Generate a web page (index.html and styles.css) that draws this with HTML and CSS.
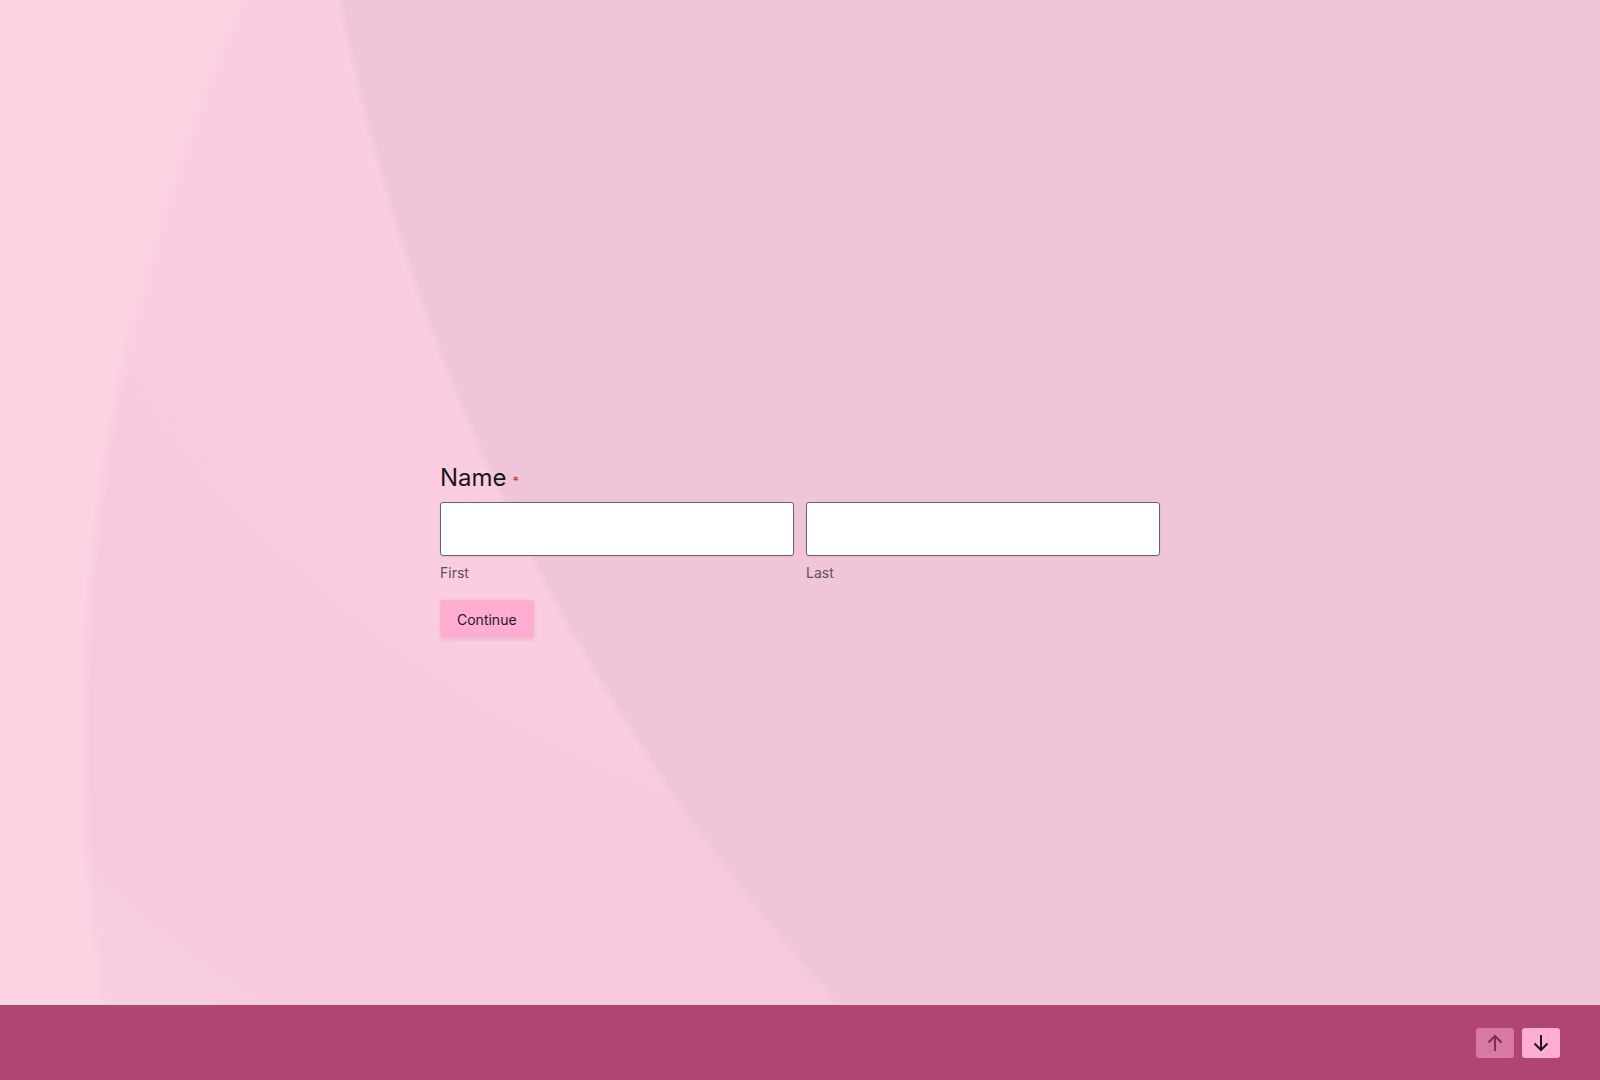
FILE: index.html
```html
<!DOCTYPE html>
<html lang="en">
<head>
<meta charset="utf-8">
<title>Name</title>
<link rel="stylesheet" href="styles.css">
</head>
<body>
<div class="page">
  <main class="stage">
    <form class="question">
      <div class="label"><span class="label-text">Name</span><span class="required">*</span></div>
      <div class="fields">
        <div class="field">
          <input class="input" type="text" aria-label="First">
          <div class="sublabel">First</div>
        </div>
        <div class="field">
          <input class="input" type="text" aria-label="Last">
          <div class="sublabel">Last</div>
        </div>
      </div>
      <button type="button" class="continue">Continue</button>
    </form>
  </main>
  <footer class="footer">
    <div class="nav">
      <button type="button" class="nav-btn nav-up" aria-label="Previous">
        <svg width="16" height="18" viewBox="0 0 16 18" fill="none" stroke="currentColor" stroke-width="2" stroke-linecap="butt" stroke-linejoin="miter"><path d="M8 17V2"/><path d="M1.5 8.5L8 2l6.5 6.5"/></svg>
      </button>
      <button type="button" class="nav-btn nav-down" aria-label="Next">
        <svg width="16" height="18" viewBox="0 0 16 18" fill="none" stroke="currentColor" stroke-width="2" stroke-linecap="butt" stroke-linejoin="miter"><path d="M8 1v15"/><path d="M1.5 9.5L8 16l6.5-6.5"/></svg>
      </button>
    </div>
  </footer>
</div>
</body>
</html>
```

FILE: styles.css
```css
html, body {
  margin: 0;
  padding: 0;
}

body {
  font-family: Inter, "Noto Sans", "Liberation Sans", sans-serif;
  color: #1c1a1b;
}

.page {
  width: 1600px;
  height: 1080px;
  display: flex;
  flex-direction: column;
  overflow: hidden;
}

.stage {
  flex: 1;
  display: flex;
  justify-content: center;
  padding-top: 462px;
  box-sizing: border-box;
  background-color: #f7cadd;
  background-image:
    radial-gradient(circle at 2389px -392px, #f1c5d8 2082px, rgba(241,197,216,0) 2090px),
    radial-gradient(circle at 1928px 741px, rgba(254,211,228,0) 1836px, #fdd2e3 1850px),
    radial-gradient(circle at 1073px -263px, #facee0 1095px, rgba(250,206,224,0) 1145px),
    radial-gradient(circle at 1073px -263px, rgba(249,205,224,0) 1480px, #f9cde0 1530px),
    linear-gradient(180deg, #f9cbde 0%, #f6c9dc 100%);
}

.question {
  width: 720px;
  display: flex;
  flex-direction: column;
  align-items: flex-start;
}

.label {
  font-size: 24px;
  line-height: 32px;
  color: #1a1718;
  margin-bottom: 5px;
}

.required {
  font-size: 13px;
  color: #c8373a;
  margin-left: 6px;
}

.fields {
  width: 100%;
  display: grid;
  grid-template-columns: 1fr 1fr;
  column-gap: 12px;
}

.field {
  display: flex;
  flex-direction: column;
}

.input {
  display: block;
  width: 100%;
  height: 54px;
  box-sizing: border-box;
  margin: 0;
  background: #ffffff;
  border: 1px solid #6b6468;
  border-radius: 3px;
  box-shadow: 0 1px 2px rgba(0, 0, 0, 0.08);
  font: inherit;
  font-size: 18px;
  padding: 0 12px;
  outline: none;
}

.sublabel {
  margin-top: 7px;
  font-size: 14px;
  line-height: 20px;
  color: #5e5258;
}

.continue {
  margin-top: 17px;
  height: 38px;
  padding: 0 17px;
  border: none;
  border-radius: 3px;
  background: #ffadd1;
  color: #1e1a1c;
  font-family: inherit;
  font-size: 14px;
  font-weight: 400;
  box-shadow: 0 2px 4px rgba(0, 0, 0, 0.08);
  cursor: pointer;
}

.footer {
  height: 75px;
  flex: none;
  background: #b04571;
  display: flex;
  align-items: center;
  justify-content: flex-end;
  padding-right: 40px;
}

.nav {
  display: flex;
  gap: 8px;
  margin-top: 1px;
}

.nav-btn {
  width: 38px;
  height: 30px;
  padding: 0;
  border: none;
  border-radius: 3px;
  display: flex;
  align-items: center;
  justify-content: center;
  cursor: pointer;
}

.nav-up {
  background: #d879a1;
  color: #7b2d53;
}

.nav-down {
  background: #ffadd1;
  color: #1c1a1b;
}
```
